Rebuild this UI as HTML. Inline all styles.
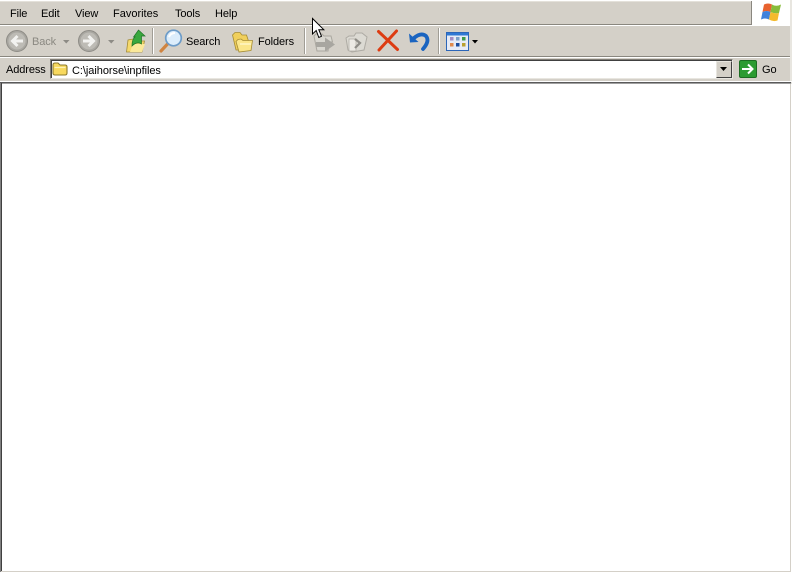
<!DOCTYPE html>
<html><head><meta charset="utf-8"><style>
html,body{margin:0;padding:0;width:792px;height:573px;overflow:hidden;background:#d4d0c8}
body{position:relative;font-family:"Liberation Sans",sans-serif;font-size:11px;color:#000}
.a{position:absolute}
.t{position:absolute;line-height:13px;white-space:nowrap;letter-spacing:-.1px}
svg{position:absolute;overflow:visible}
</style></head><body>
<div class="a" style="left:0;top:0;width:792px;height:1px;background:#fff"></div>
<div class="a" style="left:0;top:1px;width:792px;height:1px;background:#e4e1da"></div>
<div class="a" style="left:0;top:24px;width:792px;height:1px;background:#8a877f"></div>
<div class="a" style="left:0;top:25px;width:792px;height:1px;background:#fff"></div>
<div class="a" style="left:0;top:56px;width:792px;height:1px;background:#8a877f"></div>
<div class="a" style="left:0;top:57px;width:792px;height:1px;background:#fff"></div>
<div class="a" style="left:751px;top:1px;width:39px;height:24px;background:#fff;border-left:1px solid #8a877f;box-sizing:border-box"></div>
<div class="a" style="left:790px;top:0;width:2px;height:84px;background:#e8e6e0"></div>

<span class="t" style="left:10px;top:8px">File</span>
<span class="t" style="left:41px;top:8px">Edit</span>
<span class="t" style="left:75px;top:8px">View</span>
<span class="t" style="left:113px;top:8px;letter-spacing:0">Favorites</span>
<span class="t" style="left:175px;top:8px">Tools</span>
<span class="t" style="left:215px;top:8px">Help</span>

<!-- Windows flag -->
<svg style="left:761px;top:3px" width="20" height="19" viewBox="0 0 20 19">
<path d="M3 1.500Q7 -.5 11 1.500L9.500 9Q5.500 7 1.500 9Z" fill="#e8622e"/>
<path d="M11 1.500Q15 4 20 1.500L18 10Q14 11 9.500 9Z" fill="#88bc3a"/>
<path d="M1.500 9Q5.500 7 9.500 9L8 16.500Q4 14.500 0 16.500Z" fill="#3f82dc"/>
<path d="M9.500 9Q14 11 18 10L16.500 17.500Q12 19 8 16.500Z" fill="#f4ba2c"/>
</svg>

<!-- Back -->
<svg style="left:6px;top:30px" width="22" height="22" viewBox="0 0 22 22">
<circle cx="11" cy="11" r="10.500" fill="#a9a7a1" stroke="#8e8c86"/>
<circle cx="11" cy="11" r="8.500" fill="#bdbbb5"/>
<path d="M17 11H7M11.500 6L6.500 11L11.500 16" fill="none" stroke="#f2f2f0" stroke-width="3"/>
</svg>
<span class="t" style="left:32px;top:36px;color:#8b8982">Back</span>
<svg style="left:63px;top:40px" width="7" height="4"><path d="M0 0H6.500L3.250 3.500Z" fill="#8d8b85"/></svg>
<!-- Forward -->
<svg style="left:78px;top:30px" width="22" height="22" viewBox="0 0 22 22">
<circle cx="11" cy="11" r="10.500" fill="#a9a7a1" stroke="#8e8c86"/>
<circle cx="11" cy="11" r="8.500" fill="#bdbbb5"/>
<path d="M5 11H15M10.500 6L15.500 11L10.500 16" fill="none" stroke="#f2f2f0" stroke-width="3"/>
</svg>
<svg style="left:108px;top:40px" width="7" height="4"><path d="M0 0H6.500L3.250 3.500Z" fill="#8d8b85"/></svg>
<!-- Up -->
<svg style="left:125px;top:29px" width="22" height="24" viewBox="0 0 22 24">
<path d="M1.500 23L3 11L8 10L10 12H19.500L17 23Z" fill="#f5d96e" stroke="#a58c34" stroke-width=".8"/>
<path d="M5 23L8 15H20L17 23Z" fill="#fbe99a"/>
<path d="M7 17Q7 10 10 8H8.500L13.500 1L20 7H16.500V15Q12 12 7 17Z" fill="#3aa83e" stroke="#1f7327" stroke-width=".7"/>
</svg>
<div class="a" style="left:152px;top:28px;width:1px;height:26px;background:#a09d95"></div>
<div class="a" style="left:153px;top:28px;width:1px;height:26px;background:#fff"></div>
<!-- Search -->
<svg style="left:159px;top:29px" width="24" height="24" viewBox="0 0 24 24">
<path d="M2 22L9 14.500" stroke="#d08440" stroke-width="3.200" stroke-linecap="round"/>
<circle cx="14.500" cy="9" r="7.800" fill="#dcedfb" stroke="#6d9cc8" stroke-width="1.700"/>
<path d="M10 8Q11.500 4 16 4" stroke="#fff" stroke-width="2" fill="none"/>
</svg>
<span class="t" style="left:186px;top:36px">Search</span>
<!-- Folders -->
<svg style="left:232px;top:31px" width="22" height="22" viewBox="0 0 22 22">
<path d="M.5 4L3 1.500H8L10 4H14.500L16.500 10L6 19H4Z" fill="#f0cf5c" stroke="#a58c34" stroke-width=".8"/>
<path d="M4 10.500L6 8.500L9 8L11 9.500H20.500L19 19.500L7 21Z" fill="#fbe68a" stroke="#a58c34" stroke-width=".8"/>
<path d="M8 13H19" stroke="#fff6c4" stroke-width="1.500"/>
</svg>
<span class="t" style="left:258px;top:36px">Folders</span>
<div class="a" style="left:304px;top:28px;width:1px;height:26px;background:#a09d95"></div>
<div class="a" style="left:305px;top:28px;width:1px;height:26px;background:#fff"></div>
<!-- Move to -->
<svg style="left:313px;top:32px" width="23" height="21" viewBox="0 0 23 21">
<path d="M1 4L3 2H9L11 4H18L19.500 10H16L15 19H4Z" fill="#d9d7d0" stroke="#aaa79f"/>
<path d="M3 10H12V5.500L22 12.500L12 19.500V15H3Z" fill="#a8a6a0"/>
</svg>
<!-- Copy to -->
<svg style="left:345px;top:32px" width="23" height="21" viewBox="0 0 23 21">
<path d="M1 6L4 4H9L11 1H17L22 5L19 18L7 20L3 18Z" fill="#dcdad3" stroke="#aeaba4"/>
<path d="M4 7H11V19H4Z" fill="#eceae4" stroke="#aeaba4" stroke-width=".7"/>
<path d="M10 7L15 11L10 16" fill="none" stroke="#8f8d87" stroke-width="2.200"/>
</svg>
<!-- Delete -->
<svg style="left:377px;top:30px" width="22" height="21" viewBox="0 0 22 21">
<path d="M1.500 1.500L20.500 19.500M19.500 1L2 20" stroke="#dd3c12" stroke-width="3" stroke-linecap="round" fill="none"/>
</svg>
<!-- Undo -->
<svg style="left:408px;top:30px" width="22" height="22" viewBox="0 0 22 22">
<path d="M6 8Q13 2 18 6Q22 11 15 19" fill="none" stroke="#1a64c0" stroke-width="3.800" stroke-linecap="round"/>
<path d="M1 3.500L2 12.500L10.500 12Z" fill="#1a64c0"/>
</svg>
<div class="a" style="left:438px;top:28px;width:1px;height:26px;background:#a09d95"></div>
<div class="a" style="left:439px;top:28px;width:1px;height:26px;background:#fff"></div>
<!-- Views -->
<svg style="left:446px;top:32px" width="24" height="19" viewBox="0 0 24 19">
<rect x=".5" y=".5" width="22" height="18" fill="#e6ebf6" stroke="#2c66b8"/>
<rect x="1" y="1" width="21" height="2.500" fill="#2f78d4"/>
<rect x="4" y="5" width="3.500" height="3.500" fill="#a28cc4"/><rect x="10" y="5" width="3.500" height="3.500" fill="#7ca0c8"/><rect x="16" y="5" width="3.500" height="3.500" fill="#3c9a4a"/>
<rect x="4" y="11" width="3.500" height="3.500" fill="#e08a4c"/><rect x="10" y="11" width="3.500" height="3.500" fill="#1c4ea0"/><rect x="16" y="11" width="3.500" height="3.500" fill="#b8a030"/>
</svg>
<svg style="left:472px;top:40px" width="6" height="4"><path d="M0 0H6L3 3.500Z" fill="#000"/></svg>

<!-- Address bar -->
<span class="t" style="left:6px;top:64px">Address</span>
<div class="a" style="left:50px;top:59px;width:683px;height:20px;box-sizing:border-box;background:#fff;border:1px solid #7f7c75;border-right-color:#e8e6e0;border-bottom-color:#e8e6e0;box-shadow:inset 1px 1px 0 #404040"></div>
<svg style="left:52px;top:62px" width="16" height="14" viewBox="0 0 16 14">
<path d="M1 3Q1 1 3 1H6L8 3H13Q15 3 15 5V11Q15 13 13 13H3Q1 13 1 11Z" fill="#f8d95e" stroke="#8d7a2c" stroke-width="1.100"/>
<path d="M2.500 5.500H13.500" stroke="#fff3b8" stroke-width="1.200"/>
</svg>
<span class="t" style="left:72px;top:65px;letter-spacing:-.05px">C:\jaihorse\inpfiles</span>
<div class="a" style="left:716px;top:61px;width:16px;height:17px;box-sizing:border-box;background:#d4d0c8;border:1px solid;border-color:#e8e6e0 #404040 #404040 #e8e6e0"></div>
<svg style="left:720px;top:67px" width="8" height="5"><path d="M0 0H7L3.500 4Z" fill="#000"/></svg>
<!-- Go -->
<div class="a" style="left:739px;top:60px;width:18px;height:18px;box-sizing:border-box;background:#2c9b32;border:1px solid #1c6d22;border-radius:2px"></div>
<svg style="left:739px;top:60px" width="18" height="18" viewBox="0 0 18 18">
<path d="M3 9H13M9 4.500L13.500 9L9 13.500" fill="none" stroke="#fff" stroke-width="2"/>
</svg>
<span class="t" style="left:762px;top:64px">Go</span>

<!-- Content -->
<div class="a" style="left:0;top:81px;width:792px;height:1px;background:#fff"></div>
<div class="a" style="left:0;top:82px;width:791px;height:1px;background:#5a5a5a"></div>
<div class="a" style="left:0;top:83px;width:791px;height:1px;background:#a0a0a0"></div>
<div class="a" style="left:2px;top:84px;width:788px;height:487px;background:#fff"></div>
<div class="a" style="left:0;top:83px;width:1px;height:490px;background:#808080"></div>
<div class="a" style="left:1px;top:83px;width:1px;height:489px;background:#404040"></div>
<div class="a" style="left:790px;top:84px;width:1px;height:488px;background:#d4d0c8"></div>
<div class="a" style="left:791px;top:84px;width:1px;height:489px;background:#fff"></div>
<div class="a" style="left:1px;top:571px;width:790px;height:1px;background:#d4d0c8"></div>
<div class="a" style="left:0;top:572px;width:792px;height:1px;background:#fff"></div>

<!-- Cursor -->
<svg style="left:312px;top:18px" width="14" height="21" viewBox="0 0 14 21">
<path d="M.5 .5V16L4.200 12.500L6.800 19.500L9.500 18.300L6.800 11.700H11.800Z" fill="#fff" stroke="#000" stroke-width="1"/>
</svg>
</body></html>
